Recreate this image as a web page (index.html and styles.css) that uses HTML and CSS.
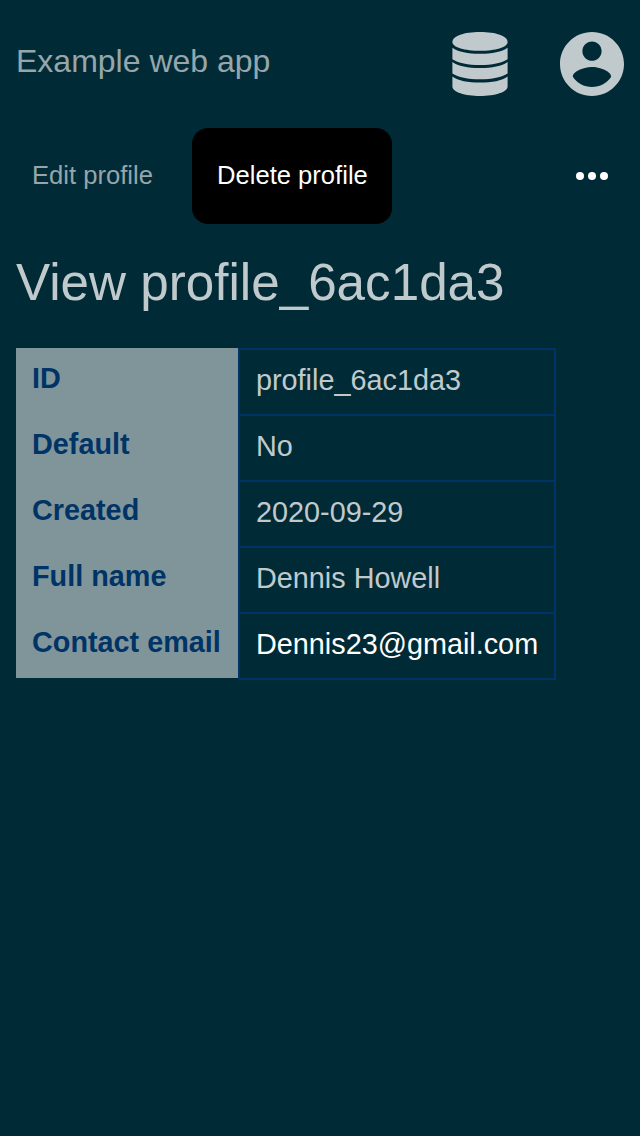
FILE: index.html
```html
<!DOCTYPE html>
<html lang="en">
<head>
<meta charset="utf-8">
<title>View profile</title>
<link rel="stylesheet" href="styles.css">
</head>
<body>
<header class="header">
  <span class="brand">Example web app</span>
  <nav class="icons">
    <svg class="database" viewBox="0 0 56 64" aria-hidden="true">
      <path d="M.4 10C.4 4 12 0 28 0S55.600 4 55.600 10C55.600 15.500 43 18.800 28 18.800S.4 15.500 .4 10Z"/>
      <path d="M.4 15.700C6 19.800 16 21.800 28 21.800S50 19.800 55.600 15.700V27.200C50 31 40 33 28 33S6 31 .4 27.200Z"/>
      <path d="M.4 30C6 34 16 36 28 36S50 34 55.600 30V41.500C50 45.300 40 47.300 28 47.300S6 45.300 .4 41.500Z"/>
      <path d="M.4 44.400C6 48.600 16 50.600 28 50.600S50 48.600 55.600 44.400V54.500C55.600 60 43 64 28 64S.4 60 .4 54.500Z"/>
    </svg>
    <svg class="account" viewBox="2 2 20 20" aria-hidden="true">
      <path d="M12 2C6.480 2 2 6.480 2 12s4.480 10 10 10 10-4.480 10-10S17.520 2 12 2zm0 3c1.660 0 3 1.340 3 3s-1.340 3-3 3-3-1.340-3-3 1.340-3 3-3zm0 14.200c-2.500 0-4.710-1.280-6-3.220.030-1.990 4-3.080 6-3.080 1.990 0 5.970 1.090 6 3.080-1.290 1.940-3.500 3.220-6 3.220z"/>
    </svg>
  </nav>
</header>
<nav class="actions">
  <a class="action">Edit profile</a>
  <a class="action action-danger">Delete profile</a>
  <svg class="more" viewBox="0 0 32 8" aria-hidden="true"><circle cx="4" cy="4" r="4"/><circle cx="16" cy="4" r="4"/><circle cx="28" cy="4" r="4"/></svg>
</nav>
<main>
  <h1 class="title">View profile_6ac1da3</h1>
  <dl class="details">
    <dt>ID</dt><dd>profile_6ac1da3</dd>
    <dt>Default</dt><dd>No</dd>
    <dt>Created</dt><dd>2020-09-29</dd>
    <dt>Full name</dt><dd>Dennis Howell</dd>
    <dt>Contact email</dt><dd class="email">Dennis23@gmail.com</dd>
  </dl>
</main>
</body>
</html>
```

FILE: styles.css
```css
* { box-sizing: border-box; }
body { margin: 0; min-height: 1136px; background: #002b36; color: #c0cacd; font-family: "Liberation Sans", Arial, sans-serif; }
.header { display: flex; justify-content: space-between; height: 128px; padding: 32px 16px; }
.brand { padding-top: 11px; font-size: 32px; line-height: 37px; color: #96a6aa; }
.icons { display: flex; gap: 52px; }
.icons svg { height: 64px; fill: #c0cacd; }
.database { width: 56px; }
.account { width: 64px; }
.actions { display: flex; align-items: center; height: 96px; padding: 0 32px 0 16px; }
.action { display: flex; align-items: center; height: 96px; padding: 0 16px 2px; font-size: 25.600px; color: #96a6aa; }
.action-danger { justify-content: center; width: 200px; margin-left: 23px; padding: 0 0 2px 1px; border-radius: 16px; background: #000; color: #fff; }
.more { width: 32px; height: 8px; margin-left: auto; fill: #fff; }
.title { margin: 29px 0 0 16px; font-size: 51.200px; line-height: 59px; font-weight: 400; }
.details { display: grid; grid-template-columns: 222px 318px; grid-auto-rows: 66px; width: 540px; margin: 36px 0 0 16px; font-size: 28.800px; line-height: 33px; }
.details dt { padding: 14px 16px; background: #80959a; color: #003366; font-weight: 700; white-space: nowrap; }
.details dd { height: 68px; margin: 0; padding: 14px 16px; border: 2px solid #003366; }
.details .email { color: #fff; }
```
